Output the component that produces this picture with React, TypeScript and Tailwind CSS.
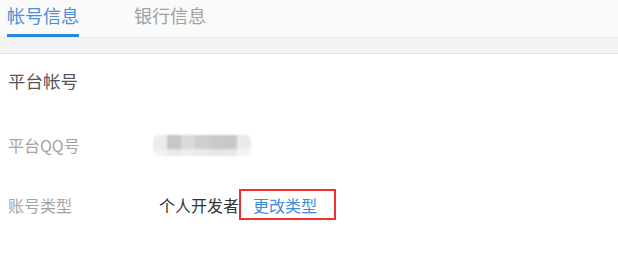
const font = "font-['Noto_Sans_CJK_SC','Noto_Sans',sans-serif]";

const mosaic = [
  ["#ececec", "#c6c6c6", "#d6dbdc", "#cecece", "#c9c9c9", "#c5c9cc", "#e9ebeb"],
  ["#f2f2f2", "#e9e9e9", "#eeeeee", "#ebebeb", "#e6e6e6", "#e8e8e8", "#f4f4f4"],
];

function Blurred() {
  return (
    <div className="flex flex-col overflow-hidden rounded-[5px] blur-[1px]">
      {mosaic.map((row, i) => (
        <div key={i} className={`flex ${i === 0 ? "h-[14px]" : "h-[7px]"}`}>
          {row.map((c, j) => (
            <div key={j} className="w-[14px]" style={{ backgroundColor: c }} />
          ))}
        </div>
      ))}
    </div>
  );
}

export default function App() {
  return (
    <div className={`w-[618px] h-[257px] bg-white ${font}`}>
      <div className="flex h-[38px] items-end gap-[55px] bg-[#fafafa] px-[7px] border-b border-[#e8e8e8]">
        <div className="flex h-full flex-col justify-between">
          <span className="pt-[1px] text-[18px] leading-[28px] text-[#4a8fd8]">帐号信息</span>
          <div className="h-[3px] w-[72px] bg-[#2b88d8]" />
        </div>
        <div className="flex h-full flex-col">
          <span className="pt-[1px] text-[18px] leading-[28px] text-[#a0a0a0]">银行信息</span>
        </div>
      </div>
      <div className="h-[16px] bg-[#f3f3f3] border-b border-[#e2e2e2]" />

      <div className="px-[8px]">
        <div className="pt-[15px] text-[17.5px] leading-[24px] text-[#555]">平台帐号</div>

        <div className="mt-[41px] flex items-center">
          <span className="w-[145px] text-[16px] leading-[22px] text-[#a3a3a3]">平台QQ号</span>
          <Blurred />
        </div>

        <div className="mt-[33px] flex items-center">
          <span className="w-[151px] text-[16px] leading-[22px] text-[#a3a3a3]">账号类型</span>
          <span className="text-[16px] leading-[22px] text-[#333]">个人开发者</span>
          <span className="flex h-[31px] w-[97px] items-center border-2 border-[#f52f2f] pl-[12px] text-[16px] text-[#3d8ad6]">
            更改类型
          </span>
        </div>
      </div>
    </div>
  );
}
